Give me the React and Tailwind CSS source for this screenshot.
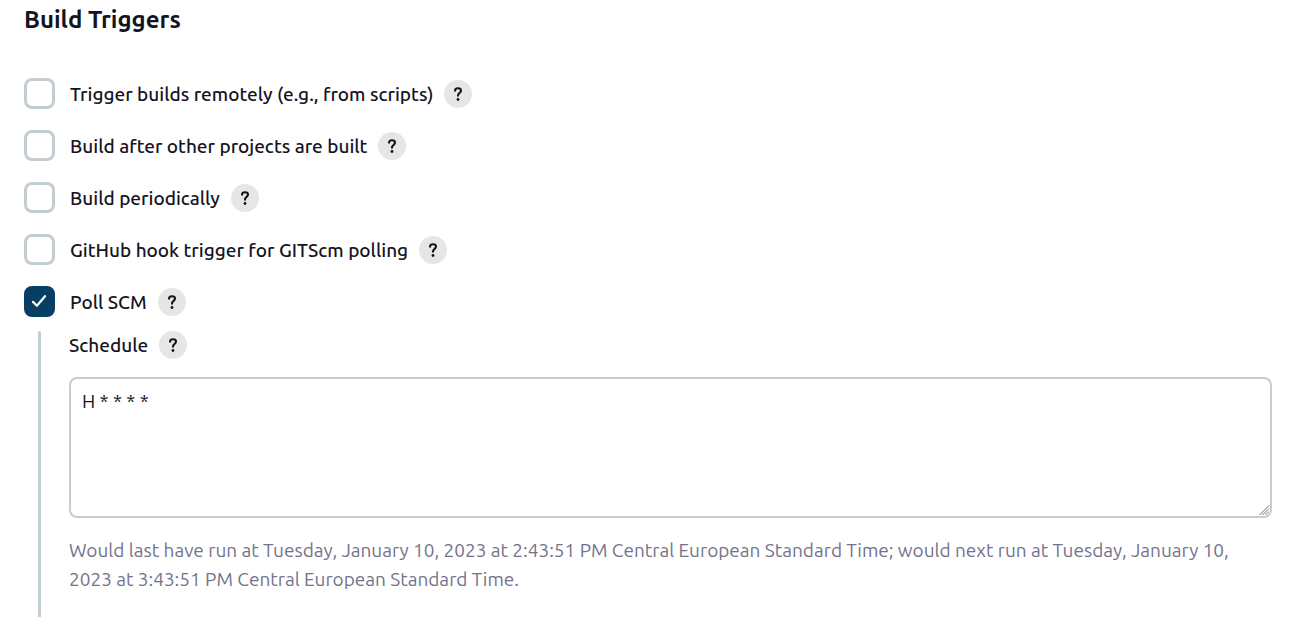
import { useState } from "react";

function HelpButton({ topic }) {
  return (
    <button
      type="button"
      aria-label={`Help for feature: ${topic}`}
      className="flex size-7 shrink-0 items-center justify-center rounded-full bg-[#e6e6e6] text-[#14141f]"
    >
      <svg viewBox="0 0 28 28" className="size-7" fill="none" aria-hidden="true">
        <path
          d="M11 10.6C11.1 9 12.3 8.2 14 8.2c1.8 0 3 .9 3 2.4 0 1.3-.7 1.9-1.6 2.6-1 .7-1.4 1.2-1.4 2.2v.3"
          stroke="currentColor"
          strokeWidth="2.1"
          strokeLinecap="round"
          strokeLinejoin="round"
        />
        <circle cx="14" cy="19.5" r="1.4" fill="currentColor" />
      </svg>
    </button>
  );
}

function Trigger({ id, label, checked, onChange }) {
  return (
    <div className="flex h-[31px] items-center">
      <span className="grid size-[31px] shrink-0">
        <input
          id={id}
          type="checkbox"
          checked={checked}
          onChange={onChange}
          className="peer col-start-1 row-start-1 size-[31px] appearance-none rounded-lg border-3 border-[#c3cdd2] bg-white checked:border-[#063f63] checked:bg-[#063f63]"
        />
        <svg
          viewBox="0 0 31 31"
          className="pointer-events-none invisible col-start-1 row-start-1 size-[31px] peer-checked:visible"
          fill="none"
          aria-hidden="true"
        >
          <path
            d="M9 15.9l3.9 3.9L21 10.2"
            stroke="white"
            strokeWidth="2.2"
            strokeLinecap="round"
            strokeLinejoin="round"
          />
        </svg>
      </span>
      <label htmlFor={id} className="mr-[11px] pl-[15px] font-medium">
        {label}
      </label>
      <HelpButton topic={label} />
    </div>
  );
}

const triggers = [
  { id: "remote", label: "Trigger builds remotely (e.g., from scripts)" },
  { id: "upstream", label: "Build after other projects are built" },
  { id: "periodic", label: "Build periodically" },
  { id: "github", label: "GitHub hook trigger for GITScm polling" },
  { id: "poll", label: "Poll SCM" },
];

export default function App() {
  const [enabled, setEnabled] = useState({ poll: true });
  const [schedule, setSchedule] = useState("H * * * *");

  return (
    <main className="bg-white pr-[37px] pl-6 font-['Ubuntu','Noto_Sans',sans-serif] text-[19px] leading-7 text-[#14141f]">
      <h2 className="pt-1 text-2xl leading-8 font-bold">Build Triggers</h2>
      <div className="mt-[42px] flex flex-col gap-[21px]">
        {triggers.map((t) => (
          <Trigger
            key={t.id}
            id={t.id}
            label={t.label}
            checked={!!enabled[t.id]}
            onChange={(e) => setEnabled({ ...enabled, [t.id]: e.target.checked })}
          />
        ))}
      </div>
      {enabled.poll && (
        <div className="mt-3.5 flex gap-7 pl-3.5">
          <div className="w-[3px] shrink-0 rounded-t-full bg-[#c3cdd2]" />
          <div className="min-w-0 flex-1 pb-[23px]">
            <div className="flex items-center gap-[11px]">
              <label htmlFor="schedule" className="font-medium">
                Schedule
              </label>
              <HelpButton topic="Schedule" />
            </div>
            <div className="relative mt-[18px]">
              <textarea
                id="schedule"
                value={schedule}
                onChange={(e) => setSchedule(e.target.value)}
                className="block h-[141px] w-full rounded-lg border-2 border-[#c3cdd2] bg-white px-[11px] py-2"
              />
              <svg
                viewBox="0 0 11 11"
                className="pointer-events-none absolute right-[2px] bottom-[2px] size-[11px]"
                aria-hidden="true"
              >
                <path d="M0 10.5L10.5 0V8L8 10.5z" fill="white" />
                <path
                  d="M.5 10L10 .5M3.5 10L10 3.5M6.5 10L10 6.5"
                  stroke="#6f6f6f"
                  strokeWidth="1"
                  fill="none"
                />
              </svg>
            </div>
            <p className="mt-[18px] leading-[29px] text-[#73738c]">
              Would last have run at Tuesday, January 10, 2023 at 2:43:51 PM Central European Standard
              Time; would next run at Tuesday, January 10, 2023 at 3:43:51 PM Central European Standard
              Time.
            </p>
          </div>
        </div>
      )}
    </main>
  );
}
